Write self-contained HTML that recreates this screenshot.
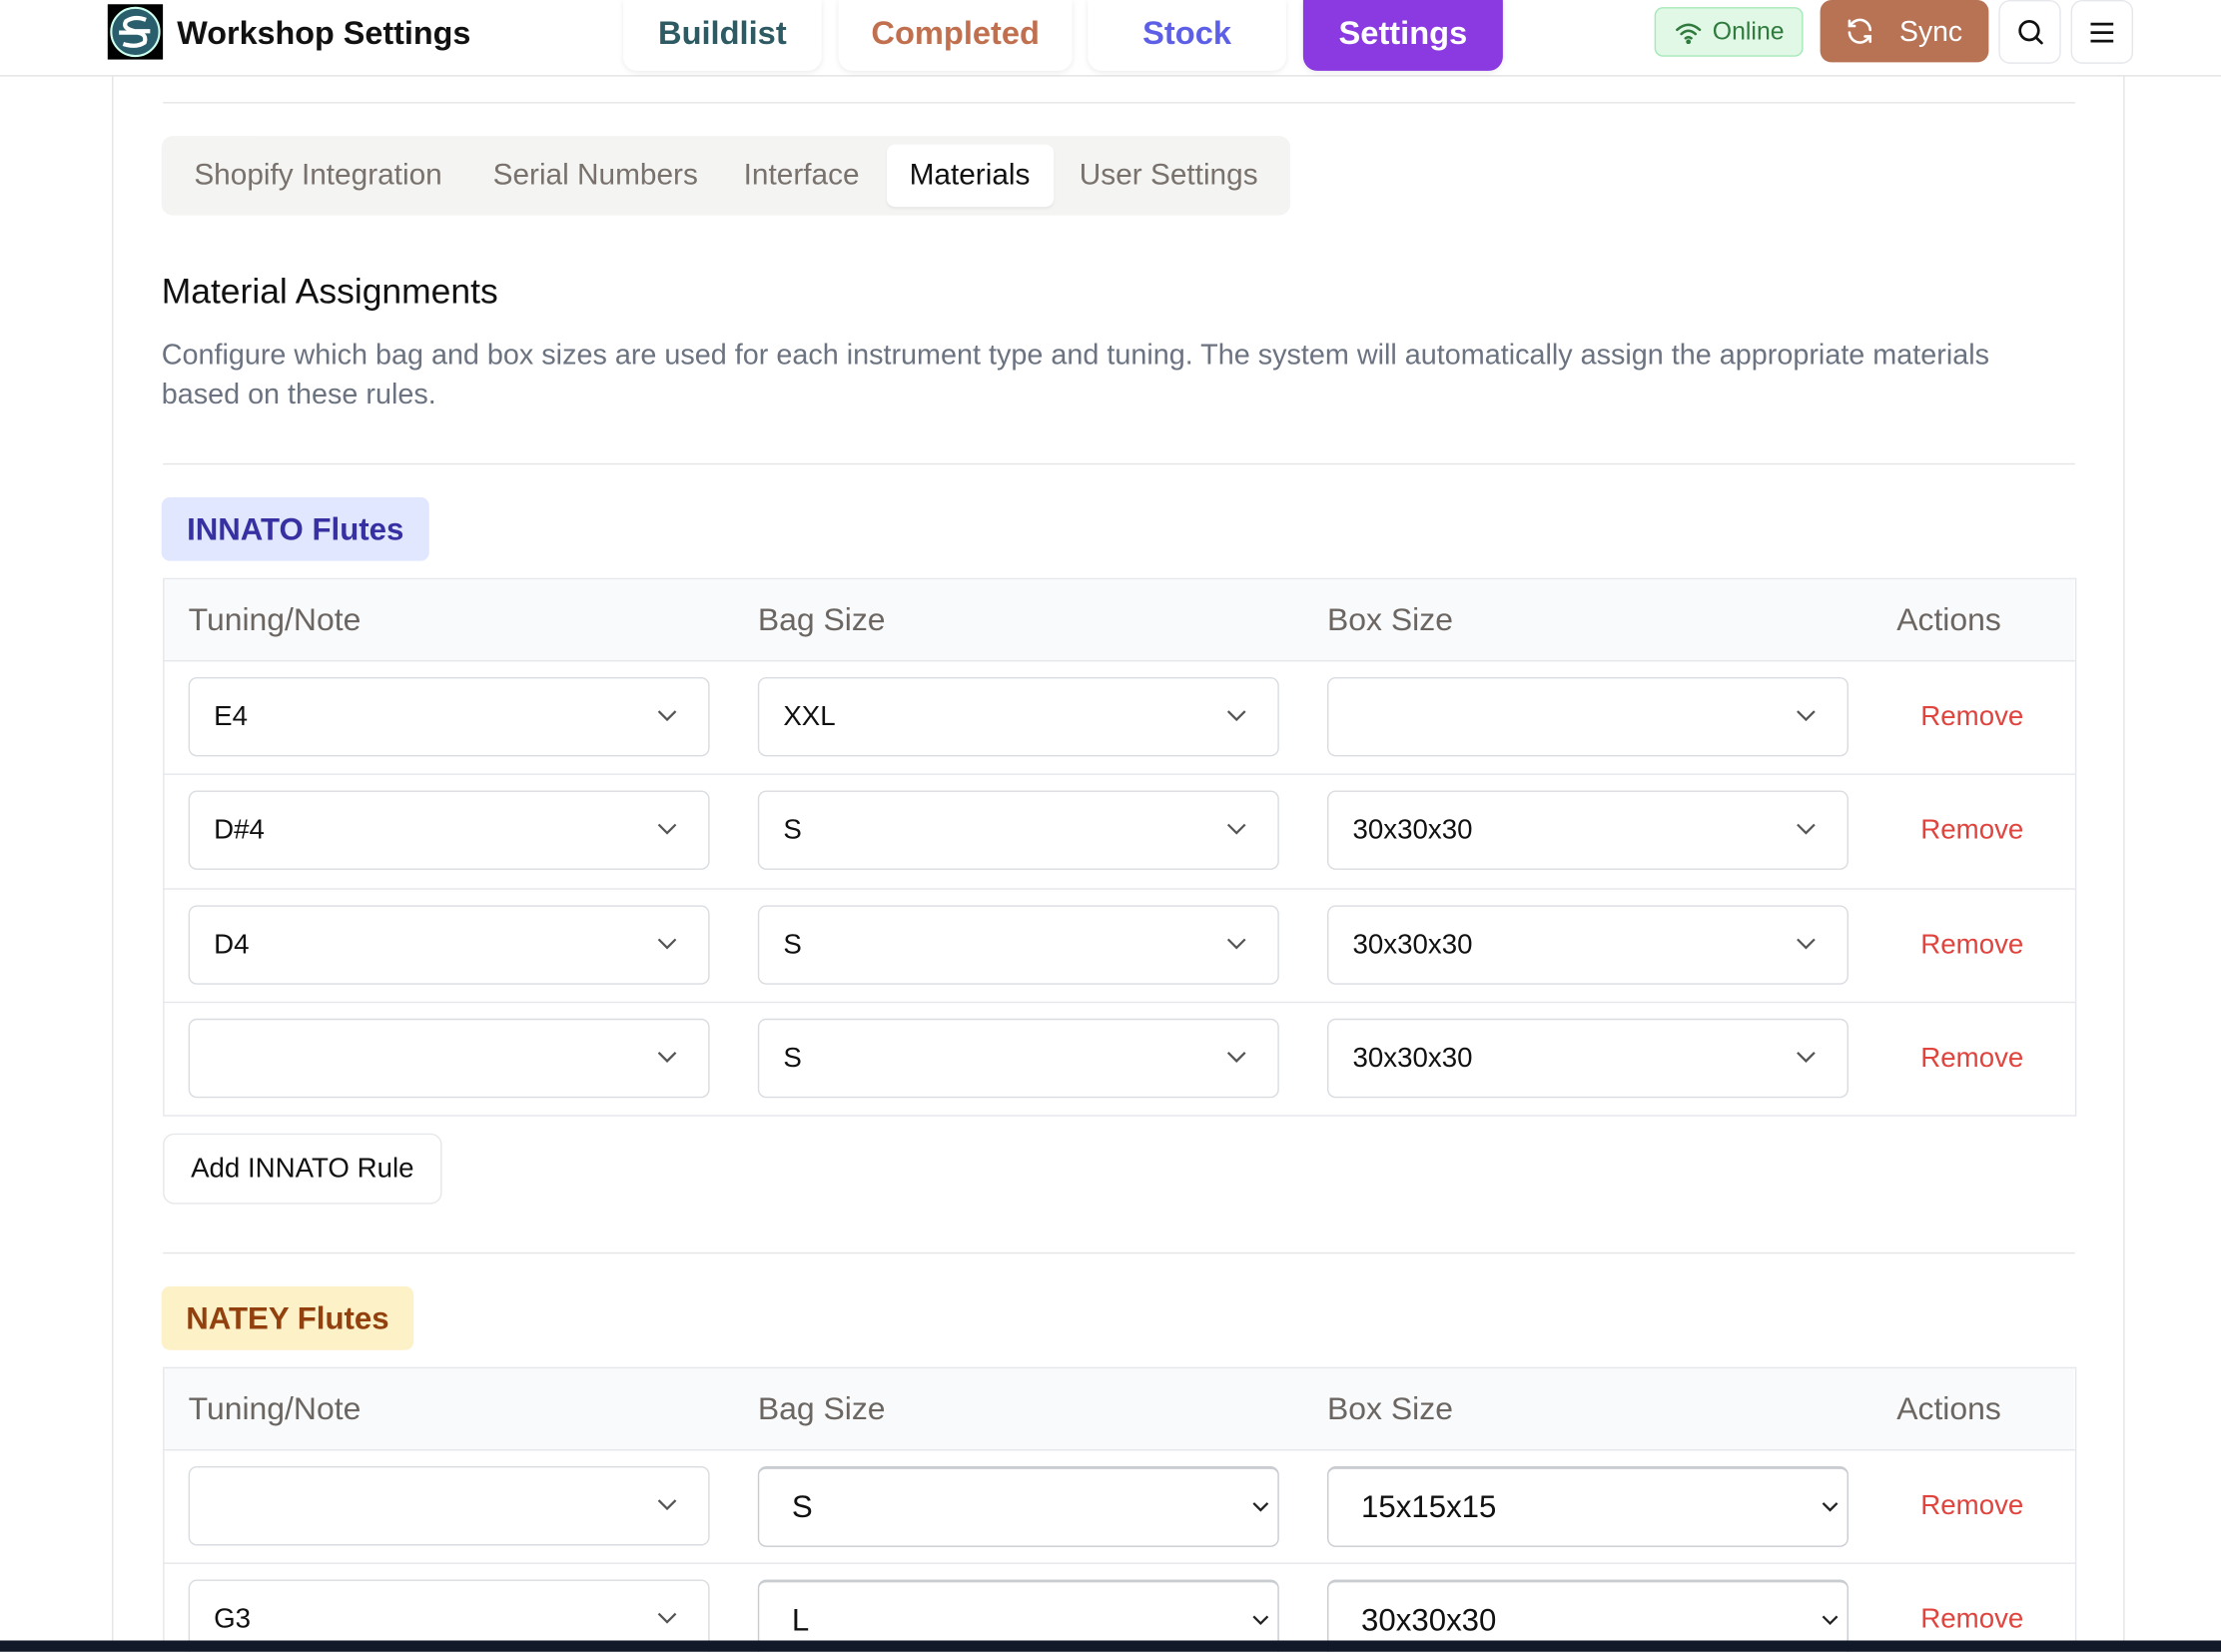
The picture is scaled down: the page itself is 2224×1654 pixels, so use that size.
<!DOCTYPE html>
<html><head><meta charset="utf-8"><style>
html,body{margin:0;padding:0;width:2224px;height:1654px;overflow:hidden;background:#fff}
#w{position:absolute;left:0;top:0;width:1568px;height:1166px;overflow:hidden;transform:scale(1.41837);transform-origin:0 0;font-family:"Liberation Sans",sans-serif;color:#111}
.a{position:absolute}
.hdr{left:0;top:0;width:1568px;height:53px;border-bottom:1px solid #e2e2e2;background:#fff}
.nav{top:0;height:47px;padding-bottom:3px;border-radius:0 0 10px 10px;background:#fff;box-shadow:0 1px 4px rgba(0,0,0,.08);font-weight:bold;font-size:23px;display:flex;align-items:center;justify-content:center}
.btn{border:1px solid #e5e7eb;border-radius:8px;background:#fff}
.hr{height:1px;background:#e5e5e5;left:115px;width:1350px}
.tab{top:112px;font-size:21px;color:#78716c}
.tbl{left:115px;width:1349px;border:1px solid #e5e7eb}
.th{font-size:22.5px;color:#6b6662}
.sel{width:366px;height:54px;border:1px solid #d9dce0;border-radius:6px;background:#fff;font-size:19.5px}
.sel span{position:absolute;left:17px;top:16px}
.sel svg{position:absolute;right:22px;top:22px}
.rm{color:#e0443e;font-size:19.5px;left:1356px}
.rowl{left:115px;width:1350px;height:1px;background:#e5e7eb}
</style></head><body><div id="w">
<div class="a hdr"></div>
<div class="a" style="left:76px;top:3px;width:39px;height:39px;background:#000"><svg width="39" height="39" viewBox="0 0 39 39"><circle cx="19.5" cy="19.5" r="17" fill="#2a5e6c" stroke="#cfe" stroke-width="1.5"/><path d="M27 11 Q19 8 13 12 Q10 17 19 19 L30 19 M8 20 L21 20 Q28 21 26 27 Q20 31 11 28" fill="none" stroke="#fff" stroke-width="3"/></svg></div>
<div class="a" style="left:125px;top:10px;font-size:22.8px;font-weight:bold">Workshop Settings</div>
<div class="a nav" style="left:440px;width:140px;color:#2d5a63">Buildlist</div>
<div class="a nav" style="left:592px;width:165px;color:#c0704f">Completed</div>
<div class="a nav" style="left:768px;width:140px;color:#5d5fe6">Stock</div>
<div class="a nav" style="left:920px;width:141px;background:#8a3ae0;color:#fff">Settings</div>
<div class="a" style="left:1168px;top:5px;width:105px;height:35px;background:#e1f8e7;border:1px solid #a5e9b7;border-radius:6px;box-sizing:border-box;color:#2f7a3c;font-size:17.5px;line-height:33px"><svg class="a" style="left:13px;top:9px" width="20" height="16" viewBox="0 0 20 16" fill="none" stroke="#2f7a3c" stroke-width="1.8" stroke-linecap="round"><path d="M2 6 Q10 -1 18 6 M5 9 Q10 4.5 15 9 M8 12 Q10 10.5 12 12"/><circle cx="10" cy="14.5" r=".8" fill="#2f7a3c"/></svg><span class="a" style="left:40px">Online</span></div>
<div class="a" style="left:1285px;top:0;width:119px;height:44px;background:#b87355;border-radius:8px;color:#fff;font-size:20px"><svg class="a" style="left:17px;top:11px" width="22" height="22" viewBox="0 0 24 24" fill="none" stroke="#fff" stroke-width="2" stroke-linecap="round"><path d="M20 11A8 8 0 0 0 6 6L4 8M4 4v4h4M4 13a8 8 0 0 0 14 5l2-2M20 20v-4h-4"/></svg><span class="a" style="left:56px;top:12px">Sync</span></div>
<div class="a btn" style="left:1411px;top:0;width:42px;height:43px"><svg class="a" style="left:11px;top:11px" width="21" height="21" viewBox="0 0 24 24" fill="none" stroke="#111" stroke-width="2.2" stroke-linecap="round"><circle cx="11" cy="11" r="7.5"/><path d="M16.5 16.5L21 21"/></svg></div>
<div class="a btn" style="left:1462px;top:0;width:42px;height:43px"><svg class="a" style="left:12px;top:14px" width="18" height="16" viewBox="0 0 18 16" stroke="#111" stroke-width="2"><path d="M1 2H17M1 8H17M1 14H17"/></svg></div>
<div class="a" style="left:79px;top:54px;width:1px;height:1104px;background:#e5e5e5"></div>
<div class="a" style="left:1499px;top:54px;width:1px;height:1104px;background:#e5e5e5"></div>
<div class="a hr" style="top:72px"></div>
<div class="a" style="left:114px;top:96px;width:797px;height:56px;background:#f4f4f3;border-radius:8px"></div>
<div class="a" style="left:626px;top:102px;width:118px;height:44px;background:#fff;border-radius:6px;box-shadow:0 1px 2px rgba(0,0,0,.06)"></div>
<div class="a tab" style="left:137px">Shopify Integration</div>
<div class="a tab" style="left:348px">Serial Numbers</div>
<div class="a tab" style="left:525px">Interface</div>
<div class="a tab" style="left:642px;color:#111">Materials</div>
<div class="a tab" style="left:762px">User Settings</div>
<div class="a" style="left:114px;top:192px;font-size:25px">Material Assignments</div>
<div class="a" style="left:114px;top:237px;width:1340px;font-size:20.3px;line-height:28px;color:#6b7280">Configure which bag and box sizes are used for each instrument type and tuning. The system will automatically assign the appropriate materials based on these rules.</div>
<div class="a hr" style="top:327px"></div>
<div class="a" style="left:114px;top:351px;width:189px;height:45px;background:#e0e7ff;border-radius:6px;color:#3730a3;font-size:22px;font-weight:600;line-height:45px;text-align:center">INNATO Flutes</div>
<div class="a tbl" style="top:408px;height:378px"></div>
<div class="a" style="left:116px;top:409px;width:1348px;height:57px;background:#f9fafb"></div>
<div class="a th" style="left:133px;top:425px">Tuning/Note</div><div class="a th" style="left:535px;top:425px">Bag Size</div><div class="a th" style="left:937px;top:425px">Box Size</div><div class="a th" style="left:1339px;top:425px">Actions</div>
<div class="a rowl" style="top:466px"></div><div class="a rowl" style="top:546px"></div><div class="a rowl" style="top:627px"></div><div class="a rowl" style="top:707px"></div>
<div id="rows"></div>
<div class="a btn" style="left:115px;top:800px;width:197px;height:50px;box-sizing:border-box;font-size:19.5px;line-height:48px;text-align:center">Add INNATO Rule</div>
<div class="a hr" style="top:884px"></div>
<div class="a" style="left:114px;top:908px;width:178px;height:45px;background:#fdf1c7;border-radius:6px;color:#92400e;font-size:22px;font-weight:600;line-height:45px;text-align:center">NATEY Flutes</div>
<div class="a tbl" style="top:965px;height:192px"></div>
<div class="a" style="left:116px;top:966px;width:1348px;height:57px;background:#f9fafb"></div>
<div class="a th" style="left:133px;top:982px">Tuning/Note</div><div class="a th" style="left:535px;top:982px">Bag Size</div><div class="a th" style="left:937px;top:982px">Box Size</div><div class="a th" style="left:1339px;top:982px">Actions</div>
<div class="a rowl" style="top:1023px"></div><div class="a rowl" style="top:1103px"></div>
<div class="a" style="left:0;top:1158px;width:1568px;height:8px;background:#111827;z-index:5"></div>
</div>
<script>
var C='<svg width="14" height="9" viewBox="0 0 14 9" fill="none" stroke="#555" stroke-width="1.6"><path d="M1 1L7 7L13 1"/></svg>';
var C2='<svg width="12" height="8" viewBox="0 0 12 8" fill="none" stroke="#222" stroke-width="1.6" style="right:6px;top:23px"><path d="M1 1L6 6L11 1"/></svg>';
var d=[[478,'E4','XXL',''],[558,'D#4','S','30x30x30'],[639,'D4','S','30x30x30'],[719,'','S','30x30x30']];
var h='';
d.forEach(function(r){var t=r[0];
[[133,r[1]],[535,r[2]],[937,r[3]]].forEach(function(c){h+='<div class="a sel" style="left:'+c[0]+'px;top:'+t+'px"><span>'+c[1]+'</span>'+C+'</div>';});
h+='<div class="a rm" style="top:'+(t+17)+'px">Remove</div>';});
var e=[[1035,'','S','15x15x15'],[1115,'G3','L','30x30x30']];
e.forEach(function(r){var t=r[0];
h+='<div class="a sel" style="left:133px;top:'+t+'px"><span>'+r[1]+'</span>'+C+'</div>';
[[535,r[2]],[937,r[3]]].forEach(function(c){h+='<div class="a sel" style="left:'+c[0]+'px;top:'+t+'px;border-color:#c9ccd1;border-top:2px solid #c9ccd1;font-size:22px"><span style="left:23px;top:14px">'+c[1]+'</span>'+C2+'</div>';});
h+='<div class="a rm" style="top:'+(t+17)+'px">Remove</div>';});
document.getElementById('rows').innerHTML=h;
</script>
</body></html>
